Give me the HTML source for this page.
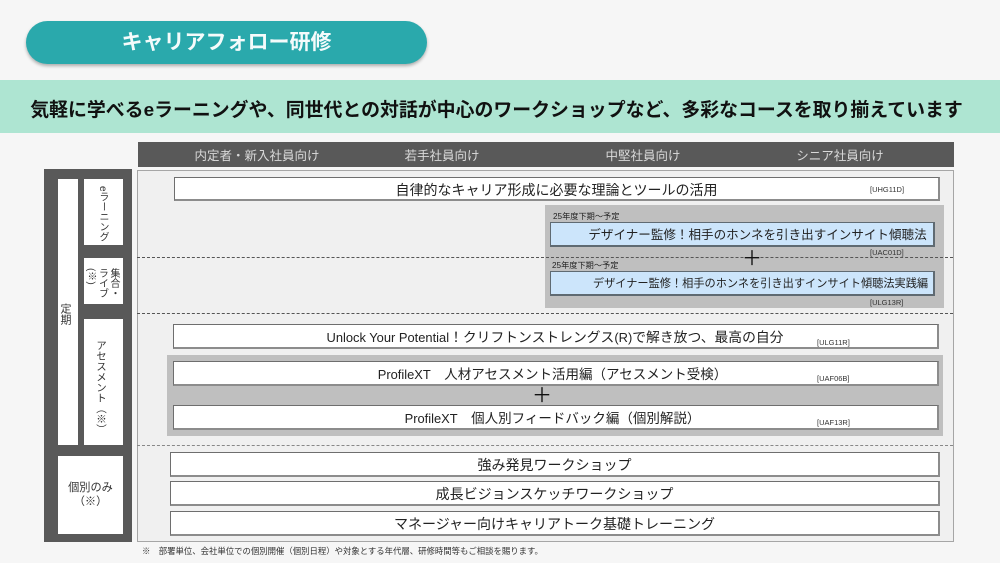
<!DOCTYPE html>
<html lang="ja"><head><meta charset="utf-8">
<style>
html,body{margin:0;padding:0}
body{width:1000px;height:563px;overflow:hidden;background:#f6f6f6;position:relative;font-family:"Liberation Sans","Noto Sans CJK JP",sans-serif;color:#222}
div{position:absolute;box-sizing:border-box}
.t{white-space:nowrap;text-align:center}
.box{background:#fff;border:1px solid #6e6e6e;border-bottom:2px solid #8c8c8c;border-right:2px solid #8c8c8c;white-space:nowrap;text-align:center;font-size:14px;line-height:23px;color:#222}
.blue{background:#cce5fb;border-color:#5f6a72}
.code{font-size:7.5px;line-height:10px;color:#333;white-space:nowrap}
.side{background:#fff;color:#333;font-size:11px}
.v{writing-mode:vertical-rl;white-space:nowrap;line-height:12px}
.dash{height:0;border-top:1px dashed #555;left:137px;width:816px}
.sm{font-size:8.2px;line-height:10px;color:#222;white-space:nowrap}
.plus{font-size:20px;line-height:20px;color:#111;text-align:center;width:30px}
.h{font-size:12.5px;line-height:16px;color:#d9d9d9;top:148px;white-space:nowrap;text-align:center}
.l{font-size:12.9px}
</style></head><body>

<div style="left:26px;top:21px;width:401px;height:43px;border-radius:22px;background:#2aa9ac;box-shadow:0 2px 3px rgba(0,0,0,.3)"></div>
<div class="t" style="left:26px;top:30px;width:401px;font-size:21px;line-height:26px;font-weight:bold;color:#f4fbfb">キャリアフォロー研修</div>

<div style="left:0;top:80px;width:1000px;height:53px;background:#aee5d2"></div>
<div class="t" style="left:0;top:98px;width:993px;font-size:18.9px;line-height:26px;font-weight:bold;color:#111">気軽に学べるeラーニングや、同世代との対話が中心のワークショップなど、多彩なコースを取り揃えています</div>

<div style="left:138px;top:142px;width:816px;height:25px;background:#595959"></div>
<div class="h" style="left:177px;width:160px">内定者・新入社員向け</div>
<div class="h" style="left:362px;width:160px">若手社員向け</div>
<div class="h" style="left:563px;width:160px">中堅社員向け</div>
<div class="h" style="left:760px;width:160px">シニア社員向け</div>

<div style="left:44px;top:169px;width:88px;height:373px;background:#595959"></div>
<div class="side" style="left:58px;top:179px;width:20px;height:266px"></div>
<div class="side v" style="left:59px;top:303px;width:12px;font-size:11px">定期</div>
<div class="side" style="left:84px;top:179px;width:39px;height:66px"></div>
<div class="v" style="left:96px;top:186px;font-size:10px;color:#333">eラーニング</div>
<div class="side" style="left:84px;top:258px;width:39px;height:46px"></div>
<div class="v" style="left:84px;top:268px;width:35px;font-size:10px;line-height:11.5px;color:#333;height:36px">集合・<br>ライブ<br>(※)</div>
<div class="side" style="left:84px;top:319px;width:39px;height:126px"></div>
<div class="v" style="left:95px;top:340px;font-size:10.5px;color:#333">アセスメント（※）</div>
<div class="side" style="left:58px;top:456px;width:65px;height:78px"></div>
<div class="t" style="left:58px;top:481px;width:65px;font-size:11.2px;line-height:14px;color:#333">個別のみ<br>（※）</div>

<div style="left:137px;top:170px;width:817px;height:372px;background:#f0f0f0;border:1px solid #a6a6a6"></div>

<div style="left:545px;top:205px;width:399px;height:103px;background:#bfbfbf"></div>
<div style="left:167px;top:355px;width:776px;height:81px;background:#bfbfbf"></div>

<div class="dash" style="top:257px"></div>
<div class="dash" style="top:313px"></div>
<div class="dash" style="top:445px;border-top-color:#888"></div>

<div class="box" style="left:174px;top:177px;width:766px;height:24px;line-height:24px">自律的なキャリア形成に必要な理論とツールの活用</div>
<div class="code" style="left:870px;top:185px">[UHG11D]</div>

<div class="sm" style="left:553px;top:212px">25年度下期～予定</div>
<div class="box blue" style="left:550px;top:222px;width:385px;height:25px;font-size:12.55px;padding-left:31px;line-height:25px">デザイナー監修！相手のホンネを引き出すインサイト傾聴法</div>
<div class="code" style="left:870px;top:248px">[UAC01D]</div>
<div class="plus" style="left:737px;top:249px">＋</div>
<div class="sm" style="left:552px;top:261px">25年度下期～予定</div>
<div class="box blue" style="left:550px;top:271px;width:385px;height:25px;font-size:11.2px;padding-left:37px;line-height:25px">デザイナー監修！相手のホンネを引き出すインサイト傾聴法実践編</div>
<div class="code" style="left:870px;top:298px">[ULG13R]</div>

<div class="box" style="left:173px;top:324px;width:766px;height:25px;font-size:13.8px;padding-right:1px;line-height:26px"><span class="l">Unlock Your Potential</span>！クリフトンストレングス<span class="l">(R)</span>で解き放つ、最高の自分</div>
<div class="code" style="left:817px;top:338px">[ULG11R]</div>

<div class="box" style="left:173px;top:361px;width:766px;height:25px;font-size:13.5px;padding-right:6px;line-height:26px"><span class="l">ProfileXT</span>　人材アセスメント活用編（アセスメント受検）</div>
<div class="code" style="left:817px;top:374px">[UAF06B]</div>
<div class="plus" style="left:527px;top:386px">＋</div>
<div class="box" style="left:173px;top:405px;width:766px;height:25px;font-size:13.5px;padding-right:6px;line-height:26px"><span class="l">ProfileXT</span>　個人別フィードバック編（個別解説）</div>
<div class="code" style="left:817px;top:418px">[UAF13R]</div>

<div class="box" style="left:170px;top:452px;width:770px;height:25px;line-height:24px">強み発見ワークショップ</div>
<div class="box" style="left:170px;top:481px;width:770px;height:25px;line-height:24px">成長ビジョンスケッチワークショップ</div>
<div class="box" style="left:170px;top:511px;width:770px;height:25px;line-height:24px">マネージャー向けキャリアトーク基礎トレーニング</div>

<div style="left:142px;top:545px;font-size:8.4px;line-height:12px;color:#333;white-space:nowrap">※　部署単位、会社単位での個別開催（個別日程）や対象とする年代層、研修時間等もご相談を賜ります。</div>

</body></html>
